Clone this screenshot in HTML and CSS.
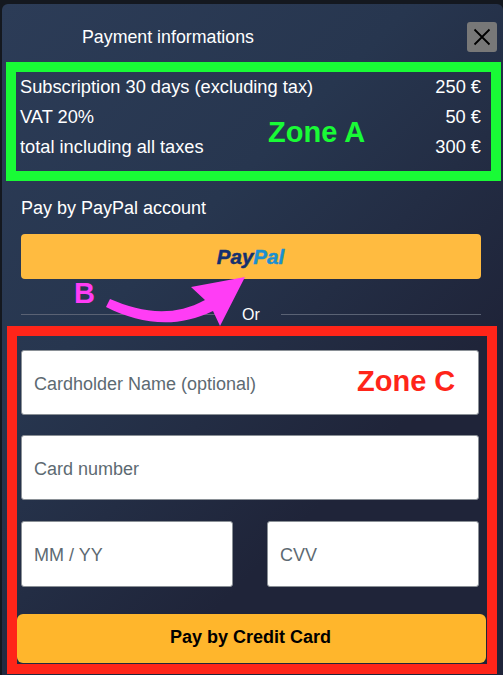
FILE: index.html
```html
<!DOCTYPE html>
<html lang="en">
<head>
<meta charset="utf-8">
<title>Payment informations</title>
<link rel="stylesheet" href="styles.css">
</head>
<body>
<div class="modal">
  <header class="modal-head">
    <h1 class="modal-title">Payment informations</h1>
    <button class="close-btn" type="button" aria-label="Close">
      <svg width="18" height="18" viewBox="0 0 18 18"><path d="M1.5 1.5L16.500 16.500M16.500 1.500L1.500 16.500" stroke="#000" stroke-width="1.800" fill="none"/></svg>
    </button>
  </header>
  <section class="zone zone-a">
    <div class="price-row"><span>Subscription 30 days (excluding tax)</span><span>250 €</span></div>
    <div class="price-row"><span>VAT 20%</span><span>50 €</span></div>
    <div class="price-row"><span>total including all taxes</span><span>300 €</span></div>
    <span class="zone-label zone-label-a">Zone A</span>
  </section>
  <p class="pay-label">Pay by PayPal account</p>
  <button class="paypal-btn" type="button"><span class="pp-dark">Pay</span><span class="pp-light">Pal</span></button>
  <div class="divider"><span class="divider-line"></span><span class="divider-text">Or</span><span class="divider-line"></span></div>
  <section class="zone zone-c">
    <input class="field" type="text" placeholder="Cardholder Name (optional)">
    <input class="field" type="text" placeholder="Card number">
    <div class="field-pair">
      <input class="field" type="text" placeholder="MM / YY">
      <input class="field" type="text" placeholder="CVV">
    </div>
    <button class="card-btn" type="button">Pay by Credit Card</button>
    <span class="zone-label zone-label-c">Zone C</span>
  </section>
  <span class="zone-label label-b">B</span>
  <svg class="arrow" width="503" height="675" viewBox="0 0 503 675" aria-hidden="true">
    <path d="M110 299C140 312 172 318 205 300L191 287L245 277L220 326L213 311C176 329 140 324 106 307Z" fill="#ff3df5"/>
  </svg>
</div>
</body>
</html>
```

FILE: styles.css
```css
* { box-sizing: border-box; }
html, body { margin: 0; height: 100%; }
body {
  background: #14181f;
  font-family: "Liberation Sans", Arial, sans-serif;
  overflow: hidden;
}
.modal {
  position: relative;
  margin: 4px 0 0 2px;
  height: 671px;
  padding: 0 0 0 4px;
  border-radius: 6px 6px 0 0;
  background: linear-gradient(135deg, #2c3c57 0%, #27364f 35%, #1f2439 70%, #1f2439 100%);
  color: #fff;
  overflow: hidden;
}
.modal-head {
  display: flex;
  justify-content: space-between;
  align-items: flex-start;
  height: 58px;
  padding: 18px 6px 0 76px;
}
.modal-title {
  margin: 5px 0 0;
  font-size: 17.800px;
  line-height: 20px;
  font-weight: 400;
}
.close-btn {
  display: flex;
  align-items: center;
  justify-content: center;
  width: 30px;
  height: 30px;
  padding: 0;
  border: 0;
  border-radius: 3px;
  background: #787878;
}
.zone { position: relative; }
.zone-a {
  width: 495px;
  height: 119px;
  padding: 0 10px 0 4px;
  border: 10px solid #19fb36;
}
.price-row {
  display: flex;
  justify-content: space-between;
  height: 30px;
  font-size: 18.250px;
  line-height: 30px;
}
.zone-label {
  position: absolute;
  font-size: 29px;
  line-height: 30px;
  font-weight: 700;
}
.zone-label-a { left: 252px; top: 45px; color: #19fb36; }
.zone-label-c { left: 340px; top: 30px; color: #ff2519; }
.label-b { left: 72px; top: 274px; color: #ff3df5; }
.pay-label {
  margin: 17px 0 0 15px;
  font-size: 18px;
  line-height: 20px;
}
.paypal-btn {
  display: block;
  width: 460px;
  height: 45px;
  margin: 16px 0 0 15px;
  padding: 0 1px 0 0;
  border: 0;
  border-radius: 4px;
  background: #ffbb40;
  font-family: "Liberation Sans", Arial, sans-serif;
  font-size: 20.500px;
  font-weight: 700;
  font-style: italic;
  -webkit-text-stroke: 0.5px currentColor;
}
.pp-dark { color: #13306f; }
.pp-light { color: #1b90d0; }
.divider {
  display: flex;
  align-items: center;
  gap: 21px;
  width: 460px;
  height: 20px;
  margin: 25px 0 0 15px;
}
.divider-line { flex: 1; height: 1px; background: #5a6274; }
.divider-text { font-size: 16px; line-height: 22px; padding-top: 1px; }
.zone-c {
  display: flex;
  flex-direction: column;
  width: 490px;
  height: 348px;
  margin: 2px 0 0 1px;
  padding: 14px 8px 0 4px;
  border: 10px solid #ff2519;
}
.field {
  display: block;
  width: 100%;
  height: 65px;
  margin: 0 0 20px;
  padding: 4px 12px 0;
  border: 1px solid #8a9096;
  border-radius: 3px;
  background: #fff;
  font-family: "Liberation Sans", Arial, sans-serif;
  font-size: 18px;
}
.field::placeholder { color: #5d6a72; opacity: 1; }
.field-pair {
  display: flex;
  gap: 34px;
  margin-top: 1px;
}
.field-pair .field { width: 212px; height: 66px; margin-bottom: 0; padding-top: 2px; }
.card-btn {
  width: 469px;
  height: 49px;
  margin: 27px 0 0 -4px;
  padding: 0 2px 2px 0;
  border: 0;
  border-radius: 6px;
  background: #ffb62c;
  color: #000;
  font-family: "Liberation Sans", Arial, sans-serif;
  font-size: 18px;
  font-weight: 700;
}
.arrow {
  position: absolute;
  left: -2px;
  top: -4px;
  pointer-events: none;
}
```
